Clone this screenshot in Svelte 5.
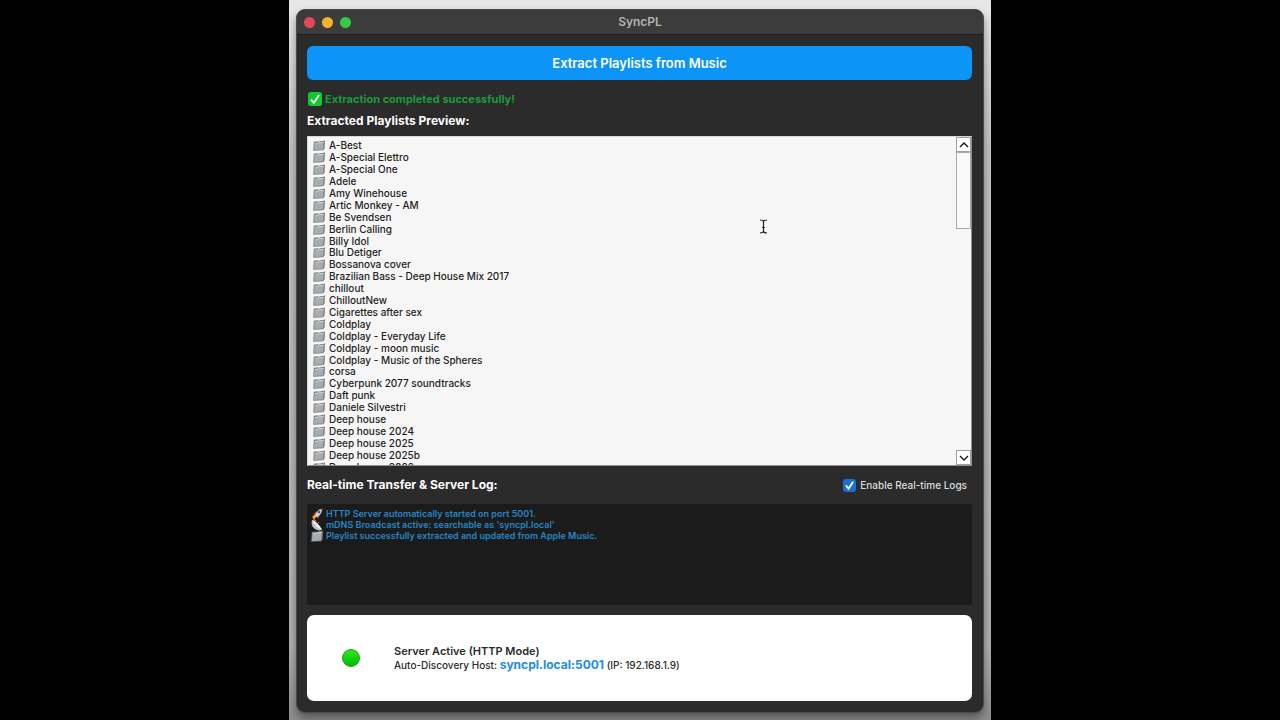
<script lang="ts">
    const playlists: string[] = [
        'A-Best',
        'A-Special Elettro',
        'A-Special One',
        'Adele',
        'Amy Winehouse',
        'Artic Monkey - AM',
        'Be Svendsen',
        'Berlin Calling',
        'Billy Idol',
        'Blu Detiger',
        'Bossanova cover',
        'Brazilian Bass - Deep House Mix 2017',
        'chillout',
        'ChilloutNew',
        'Cigarettes after sex',
        'Coldplay',
        'Coldplay - Everyday Life',
        'Coldplay - moon music',
        'Coldplay - Music of the Spheres',
        'corsa',
        'Cyberpunk 2077 soundtracks',
        'Daft punk',
        'Daniele Silvestri',
        'Deep house',
        'Deep house 2024',
        'Deep house 2025',
        'Deep house 2025b',
        'Deep house 2026'
    ];

    const logs = [
        { icon: 'rocket', text: 'HTTP Server automatically started on port 5001.' },
        { icon: 'dish', text: "mDNS Broadcast active: searchable as 'syncpl.local'" },
        { icon: 'folder', text: 'Playlist successfully extracted and updated from Apple Music.' }
    ];

    let logsEnabled = $state(true);
    let listBox: HTMLElement;

    function scrollList(amount: number) {
        listBox.scrollTop += amount;
    }
</script>

<svelte:head>
    <title>SyncPL</title>
</svelte:head>

{#snippet folder()}
    <svg class="folder" viewBox="0 0 12 12" preserveAspectRatio="none" aria-hidden="true">
        <path d="M0.8 2 L4.5 1.4 L5.3 1.8 L12 0.6 L11.5 9.6 L10.2 11.2 L0.2 11.8 Z" fill="#777c7f" />
        <path d="M1.6 3.2 L10.8 2 L10 10.4 L0.9 11 Z" fill="#a6acaf" />
        <path d="M1.6 3.2 L10.8 2 L10.7 2.9 L1.6 4 Z" fill="#ced3d5" />
    </svg>
{/snippet}

<div class="desktop">
    <main class="window">
        <header class="titlebar">
            <div class="lights">
                <button class="light red" aria-label="Close"></button>
                <button class="light yellow" aria-label="Minimize"></button>
                <button class="light green" aria-label="Zoom"></button>
            </div>
            <h1>SyncPL</h1>
        </header>

        <div class="content">
            <button class="extract">Extract Playlists from Music</button>

            <p class="result">
                <svg viewBox="0 0 14 14" aria-hidden="true">
                    <rect width="14" height="14" rx="2.5" fill="#10c92c" />
                    <path d="M3 7.6 L5.8 11 L11 3" fill="none" stroke="#fff" stroke-width="1.8" />
                </svg>
                Extraction completed successfully!
            </p>

            <h2>Extracted Playlists Preview:</h2>

            <section class="preview">
                <div class="listBox" bind:this={listBox}>
                    <ul>
                        {#each playlists as playlist}
                            <li>{@render folder()}{playlist}</li>
                        {/each}
                    </ul>
                </div>
                <div class="scrollbar">
                    <button aria-label="Scroll up" onclick={() => scrollList(-12)}>
                        <svg viewBox="0 0 12 12"><path d="M2 8 L6 4 L10 8" /></svg>
                    </button>
                    <div class="track"><div class="thumb"></div></div>
                    <button aria-label="Scroll down" onclick={() => scrollList(12)}>
                        <svg viewBox="0 0 12 12"><path d="M2 4 L6 8 L10 4" /></svg>
                    </button>
                </div>
                <svg class="cursor" viewBox="0 0 9 15" aria-hidden="true">
                    <path d="M1 1 Q4 1 4.5 2.5 Q5 1 8 1 M4.5 2 V13 M1 14 Q4 14 4.5 12.5 Q5 14 8 14 M3 8.5 H6" />
                </svg>
            </section>

            <div class="logHeader">
                <h2>Real-time Transfer &amp; Server Log:</h2>
                <label>
                    <input type="checkbox" bind:checked={logsEnabled} />
                    Enable Real-time Logs
                </label>
            </div>

            <ul class="log">
                {#each logs as log}
                    <li>
                        {#if log.icon === 'rocket'}
                            <svg viewBox="0 0 12 12" aria-hidden="true">
                                <path d="M1 9 L4 6 L6 8 L2.5 12 L2 10 Z" fill="#f2a81d" />
                                <path d="M2 6 L5 4 L5 7 Z M6 8 L9 6.5 L7 11 Z" fill="#d52b25" />
                                <path d="M4 7.5 Q5 2 11.5 0.5 Q11 6 6 9.5 Z" fill="#c9ced2" />
                                <circle cx="8" cy="4" r="1.3" fill="#355069" />
                                <path d="M9.5 1.2 L11.5 0.5 L11 2.8 Z" fill="#d52b25" />
                            </svg>
                        {:else if log.icon === 'dish'}
                            <svg viewBox="0 0 12 12" aria-hidden="true">
                                <path d="M3 0 L5.5 1.5 L4.5 3 L2 2 Z" fill="#e0554c" />
                                <path d="M1 1 Q-0.5 7 4 10 Q8 12.5 11 10.5 Z" fill="#bfc3c6" />
                                <path d="M1 1 Q6 2 11 10.5 Q6 10 1 1 Z" fill="#f1f2f2" />
                                <path d="M5 6 L8 3" stroke="#a6abad" stroke-width="0.8" />
                            </svg>
                        {:else}
                            {@render folder()}
                        {/if}
                        {log.text}
                    </li>
                {/each}
            </ul>

            <section class="server">
                <span class="dot"></span>
                <div>
                    <strong>Server Active (HTTP Mode)</strong>
                    <p>Auto-Discovery Host: <a href="http://syncpl.local:5001">syncpl.local:5001</a> (IP: 192.168.1.9)</p>
                </div>
            </section>
        </div>
    </main>
</div>

<style>
    :global(body) {
        background: #000;
    }
    .desktop {
        box-sizing: border-box;
        display: flex;
        max-width: 702px;
        height: 100vh;
        min-height: 560px;
        margin: 0 auto;
        padding: 9px 7px 7px;
        overflow: hidden;
        background: linear-gradient(#e8e8e8, #e2e2e2 4%, #c4c4c4 20%, #b0b0b0 90%, #8c8c8c);
        font-family: Inter, "Liberation Sans", sans-serif;
        color: #fff;
    }
    .window {
        box-sizing: border-box;
        display: flex;
        flex-direction: column;
        flex: 1;
        min-width: 0;
        border: 1px solid #4a4a4a;
        border-radius: 9px;
        background: #2b2b2b;
        box-shadow: 0 5px 9px rgba(0, 0, 0, 0.4);
        overflow: hidden;
    }
    .titlebar {
        display: grid;
        grid-template-columns: 1fr auto 1fr;
        align-items: center;
        height: 24px;
        background: #3c3c3c;
        border-bottom: 1px solid #1c1c1c;
    }
    h1 {
        margin: 0;
        font-size: 12px;
        line-height: 16px;
        font-weight: 600;
        color: #b4b4b4;
    }
    .lights {
        display: flex;
        gap: 7px;
        padding-left: 7px;
    }
    .light {
        width: 11px;
        height: 11px;
        padding: 0;
        border: 0;
        border-radius: 50%;
    }
    .red {
        background: #e5485a;
    }
    .yellow {
        background: #f2b42f;
    }
    .green {
        background: #32cb4b;
    }
    .content {
        display: flex;
        flex-direction: column;
        flex: 1;
        min-height: 0;
        padding: 11px 11px 11px 10px;
    }
    .extract {
        flex: none;
        height: 34px;
        border: 0;
        border-radius: 6px;
        background: #0c94f6;
        color: #fff;
        font: 600 13px "Inter", sans-serif;
    }
    .result {
        display: flex;
        align-items: center;
        gap: 3px;
        margin: 11px 0 6px;
        padding-left: 1px;
        font-size: 11px;
        line-height: 16px;
        font-weight: 700;
        color: #1b9a3a;
    }
    .result svg {
        width: 14px;
        height: 14px;
    }
    h2 {
        margin: 0;
        font-size: 12px;
        line-height: 16px;
        font-weight: 700;
    }
    .preview {
        position: relative;
        display: flex;
        flex: 1;
        min-height: 0;
        margin-top: 7px;
        border: 1px solid #8e8e8e;
        border-top-color: #d8d8d8;
        border-left-color: #d8d8d8;
        background: #f6f6f6;
        color: #1e1e1e;
    }
    .listBox {
        flex: 1;
        overflow: hidden;
    }
    ul {
        margin: 0;
        padding: 0;
        list-style: none;
    }
    .listBox ul {
        display: grid;
        grid-auto-rows: 1fr;
        height: 333px;
        padding: 3px 5px;
    }
    .listBox li {
        display: flex;
        align-items: center;
        gap: 4px;
        font-size: 10px;
        line-height: 11px;
        font-weight: 500;
        white-space: nowrap;
    }
    .folder {
        flex: none;
        width: 12px;
        height: 11px;
    }
    .scrollbar {
        display: flex;
        flex-direction: column;
        width: 15px;
    }
    .scrollbar button {
        display: flex;
        justify-content: center;
        align-items: center;
        flex: none;
        height: 15px;
        padding: 0;
        border: 1px solid #a0a0a0;
        background: #fff;
    }
    .scrollbar svg {
        width: 12px;
        height: 12px;
        fill: none;
        stroke: #222;
        stroke-width: 1.5;
    }
    .track {
        flex: 1;
    }
    .thumb {
        box-sizing: border-box;
        height: 26%;
        border: 1px solid #a8a8a8;
        background: #fafafa;
    }
    .cursor {
        position: absolute;
        left: 68%;
        top: 25%;
        width: 9px;
        height: 15px;
        fill: none;
        stroke: #222;
        stroke-width: 1.2;
    }
    .logHeader {
        display: flex;
        justify-content: space-between;
        align-items: center;
        margin: 11px 0;
        padding-right: 5px;
    }
    label {
        display: flex;
        align-items: center;
        gap: 4px;
        font-size: 10px;
        line-height: 16px;
        font-weight: 500;
        color: #dcdcdc;
    }
    input {
        appearance: none;
        width: 13px;
        height: 13px;
        margin: 0;
        border-radius: 3px;
        background: #565656;
    }
    input:checked {
        background: #1a6fd0 url("data:image/svg+xml,%3Csvg xmlns='http://www.w3.org/2000/svg' viewBox='0 0 12 12'%3E%3Cpath d='M3 6.4 L5.2 9 L9 3' fill='none' stroke='white' stroke-width='1.6' stroke-linecap='round'/%3E%3C/svg%3E");
    }
    .log {
        box-sizing: border-box;
        flex: none;
        min-height: 101px;
        padding: 4px 4px;
        border-radius: 3px;
        background: #1b1b1b;
        color: #2587c8;
        font-size: 9px;
        line-height: 11px;
        font-weight: 600;
    }
    .log li {
        display: flex;
        align-items: center;
        gap: 3px;
        height: 11px;
    }
    .log svg {
        flex: none;
        width: 12px;
        height: 12px;
    }
    .server {
        box-sizing: border-box;
        display: flex;
        align-items: center;
        flex: none;
        gap: 34px;
        min-height: 86px;
        margin-top: 10px;
        padding: 0 35px;
        border-radius: 7px;
        background: #fff;
        color: #2b2b2b;
        font-size: 10px;
        line-height: 14px;
        font-weight: 500;
    }
    .server strong {
        font-size: 11px;
        font-weight: 600;
    }
    .server p {
        margin: 0;
    }
    .server a {
        color: #1f8ce0;
        font-size: 12px;
        font-weight: 700;
        text-decoration: none;
    }
    .dot {
        box-sizing: border-box;
        width: 18px;
        height: 18px;
        border: 1px solid #1b9d1b;
        border-radius: 50%;
        background: linear-gradient(#2be81c, #05b805);
    }
</style>
